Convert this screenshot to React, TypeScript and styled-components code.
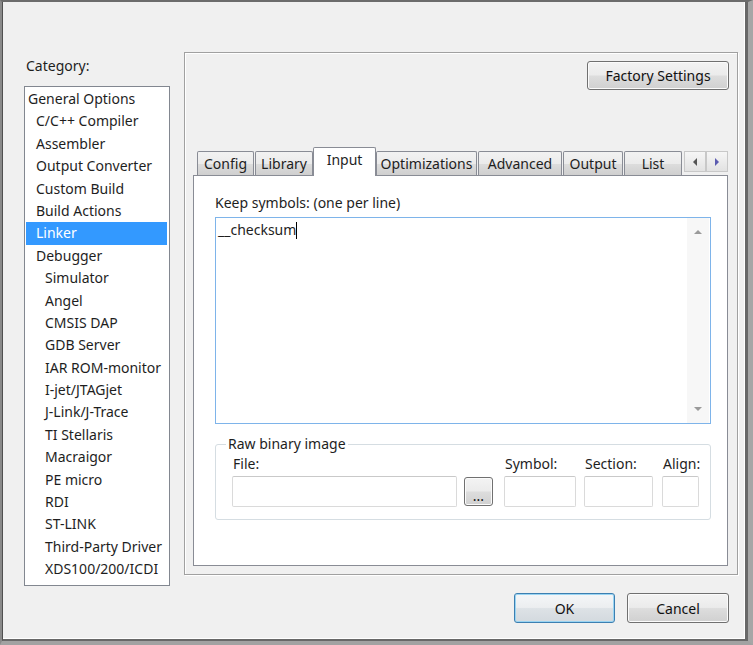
import React from 'react';
import styled, { createGlobalStyle, css } from 'styled-components';

const FONT = `"Noto Sans", "Open Sans", sans-serif`;

const GlobalStyle = createGlobalStyle`
  html, body { margin: 0; padding: 0; }
  body {
    background: #f0f0f0;
    font-family: ${FONT};
    font-size: 14px;
    color: #1e1e1e;
  }
  * { box-sizing: border-box; }
`;

const Window = styled.div`
  width: 753px;
  height: 645px;
  background: #f0f0f0;
  border-top: 2px solid #6c6c6c;
  border-left: 2px solid #8a8a8a;
  border-right: 5px solid #a6a6a6;
  border-bottom: 4px solid #a2a2a2;
  display: flex;
  overflow: hidden;
`;

const Frame = styled.div`
  flex: 1;
  display: flex;
  align-items: flex-start;
  border-left: 1px solid #505050;
  border-right: 3px solid #686868;
  border-bottom: 2px solid #686868;
  box-shadow: inset -1px 0 0 #fff, inset 0 -1px 0 #fff;
  padding-left: 21px;
`;

const LeftColumn = styled.div`
  width: 146px;
  display: flex;
  flex-direction: column;
  margin-top: 55px;
`;

const CategoryLabel = styled.div`
  height: 18px;
  line-height: 18px;
  padding-left: 2px;
`;

const CategoryList = styled.div`
  margin-top: 11px;
  height: 500px;
  background: #fff;
  border: 1px solid #828790;
  padding: 1px 2px 1px 1px;
`;

const CategoryItem = styled.div<{ $level: number; $selected?: boolean }>`
  height: 22.4px;
  line-height: 22.4px;
  white-space: nowrap;
  padding-left: ${(p) => 2 + (p.$level === 0 ? 0 : p.$level === 1 ? 8 : 17)}px;
  ${(p) =>
    p.$selected &&
    css`
      background: #3399ff;
      color: #fff;
    `}
`;

const RightColumn = styled.div`
  width: 554px;
  margin-left: 14px;
  margin-top: 50px;
  display: flex;
  flex-direction: column;
`;

const Panel = styled.div`
  height: 523px;
  border: 1px solid #a0a0a0;
  box-shadow: 1px 1px 0 #fff, inset 1px 1px 0 #fff;
  display: flex;
  flex-direction: column;
  padding: 8px 8px 8px 8px;
`;

const FactoryRow = styled.div`
  display: flex;
  justify-content: flex-end;
`;

const PushButton = styled.button<{ $w: number; $h: number; $default?: boolean }>`
  width: ${(p) => p.$w}px;
  height: ${(p) => p.$h}px;
  font-family: ${FONT};
  font-size: 14px;
  color: #111;
  padding: 0;
  border: 1px solid #707070;
  border-radius: 3px;
  background: linear-gradient(#f3f3f3 0%, #ebebeb 48%, #dddddd 52%, #d0d0d0 100%);
  box-shadow: inset 0 0 0 1px #fbfbfb;
  ${(p) =>
    p.$default &&
    css`
      border-color: #3c7fb1;
      background: linear-gradient(#f4f6f8 0%, #eceef0 48%, #dde2e6 52%, #d3d9de 100%);
      box-shadow: inset 0 0 0 1px #9ad4f2;
    `}
`;

const TabControl = styled.div`
  margin-top: 57px;
  margin-right: 1px;
  flex: 1;
  display: flex;
  flex-direction: column;
`;

const TabStrip = styled.div`
  height: 28px;
  display: flex;
  align-items: flex-end;
  gap: 1px;
  padding-left: 4px;
  position: relative;
  z-index: 1;
`;

const Tab = styled.div<{ $w: number; $active?: boolean }>`
  width: ${(p) => p.$w}px;
  height: 24px;
  line-height: 23px;
  text-align: center;
  white-space: nowrap;
  border: 1px solid #898c95;
  border-bottom: none;
  border-radius: 2px 2px 0 0;
  background: linear-gradient(#f2f2f2 0%, #ebebeb 50%, #dddddd 50%, #cfcfcf 100%);
  ${(p) =>
    p.$active &&
    css`
      height: 29px;
      line-height: 24px;
      margin: 0 -1px -1px;
      background: #fff;
    `}
`;

const TabScroller = styled.div`
  margin-left: auto;
  align-self: flex-start;
  margin-top: 4px;
  display: flex;
`;

const ScrollArrowButton = styled.div`
  width: 22px;
  height: 21px;
  border: 1px solid #c8c8c8;
  background: linear-gradient(#f6f6f6, #e2e2e2);
  display: flex;
  align-items: center;
  justify-content: center;
`;

const TabPage = styled.div`
  flex: 1;
  background: #fff;
  border: 1px solid #898c95;
  padding: 18px 16px 0 21px;
  display: flex;
  flex-direction: column;
`;

const FieldCaption = styled.div`
  height: 18px;
  line-height: 18px;
  white-space: nowrap;
`;

const Memo = styled.div`
  margin-top: 5px;
  width: 496px;
  height: 207px;
  border: 1px solid #7eb4ea;
  display: flex;
`;

const MemoText = styled.div`
  flex: 1;
  padding: 3px 2px;
  line-height: 18px;
`;

const Caret = styled.span`
  display: inline-block;
  width: 1px;
  height: 17px;
  background: #000;
  vertical-align: -4px;
`;

const MemoScroll = styled.div`
  width: 22px;
  margin-right: 1px;
  background: #f7f7f7;
  display: flex;
  flex-direction: column;
  justify-content: space-between;
`;

const MemoScrollButton = styled.div`
  height: 28px;
  display: flex;
  align-items: center;
  justify-content: center;
`;

const Group = styled.fieldset`
  margin: 12px 0 0;
  width: 496px;
  border: 1px solid #d5dde2;
  border-radius: 3px;
  padding: 3px 10px 12px 16px;
`;

const GroupLegend = styled.legend`
  padding: 0 2px;
  line-height: 16px;
  margin-left: -6px;
`;

const FieldRow = styled.div`
  display: flex;
  align-items: flex-end;
`;

const Field = styled.div<{ $w: number; $ml?: number }>`
  width: ${(p) => p.$w}px;
  margin-left: ${(p) => p.$ml ?? 0}px;
  display: flex;
  flex-direction: column;
`;

const FieldLabel = styled.div`
  line-height: 18px;
  height: 18px;
  margin-bottom: 3px;
  padding-left: 1px;
  white-space: nowrap;
`;

const TextBox = styled.div`
  height: 31px;
  background: #fff;
  border: 1px solid #dadada;
  border-top-color: #c9c9c9;
  border-radius: 2px;
`;

const BrowseButton = styled(PushButton)`
  margin-left: 7px;
  margin-bottom: 1px;
  line-height: 1;
  padding-top: 8px;
`;

const ButtonRow = styled.div`
  margin-top: 18px;
  display: flex;
  justify-content: flex-end;
  gap: 12px;
  padding-right: 9px;
`;

const categories: { label: string; level: number }[] = [
  { label: 'General Options', level: 0 },
  { label: 'C/C++ Compiler', level: 1 },
  { label: 'Assembler', level: 1 },
  { label: 'Output Converter', level: 1 },
  { label: 'Custom Build', level: 1 },
  { label: 'Build Actions', level: 1 },
  { label: 'Linker', level: 1 },
  { label: 'Debugger', level: 1 },
  { label: 'Simulator', level: 2 },
  { label: 'Angel', level: 2 },
  { label: 'CMSIS DAP', level: 2 },
  { label: 'GDB Server', level: 2 },
  { label: 'IAR ROM-monitor', level: 2 },
  { label: 'I-jet/JTAGjet', level: 2 },
  { label: 'J-Link/J-Trace', level: 2 },
  { label: 'TI Stellaris', level: 2 },
  { label: 'Macraigor', level: 2 },
  { label: 'PE micro', level: 2 },
  { label: 'RDI', level: 2 },
  { label: 'ST-LINK', level: 2 },
  { label: 'Third-Party Driver', level: 2 },
  { label: 'XDS100/200/ICDI', level: 2 },
];

const tabs: { label: string; w: number }[] = [
  { label: 'Config', w: 57 },
  { label: 'Library', w: 58 },
  { label: 'Input', w: 63 },
  { label: 'Optimizations', w: 101 },
  { label: 'Advanced', w: 84 },
  { label: 'Output', w: 60 },
  { label: 'List', w: 58 },
];

const Triangle = ({ dir, color }: { dir: 'left' | 'right' | 'up' | 'down'; color: string }) => {
  const pts =
    dir === 'left'
      ? '6,0 2,4 6,8'
      : dir === 'right'
      ? '2,0 6,4 2,8'
      : dir === 'up'
      ? '0,6 4,2 8,6'
      : '0,2 4,6 8,2';
  return (
    <svg width="8" height="8" viewBox="0 0 8 8">
      <polygon points={pts} fill={color} />
    </svg>
  );
};

export default function App() {
  return (
    <>
      <GlobalStyle />
      <Window>
        <Frame>
          <LeftColumn>
            <CategoryLabel>Category:</CategoryLabel>
            <CategoryList>
              {categories.map((c) => (
                <CategoryItem key={c.label} $level={c.level} $selected={c.label === 'Linker'}>
                  {c.label}
                </CategoryItem>
              ))}
            </CategoryList>
          </LeftColumn>
          <RightColumn>
            <Panel>
              <FactoryRow>
                <PushButton $w={142} $h={29}>Factory Settings</PushButton>
              </FactoryRow>
              <TabControl>
                <TabStrip>
                  {tabs.map((t) => (
                    <Tab key={t.label} $w={t.w} $active={t.label === 'Input'}>
                      {t.label}
                    </Tab>
                  ))}
                  <TabScroller>
                    <ScrollArrowButton>
                      <Triangle dir="left" color="#555" />
                    </ScrollArrowButton>
                    <ScrollArrowButton>
                      <Triangle dir="right" color="#5b5bb0" />
                    </ScrollArrowButton>
                  </TabScroller>
                </TabStrip>
                <TabPage>
                  <FieldCaption>Keep symbols: (one per line)</FieldCaption>
                  <Memo>
                    <MemoText>
                      __checksum
                      <Caret />
                    </MemoText>
                    <MemoScroll>
                      <MemoScrollButton>
                        <Triangle dir="up" color="#9a9a9a" />
                      </MemoScrollButton>
                      <MemoScrollButton>
                        <Triangle dir="down" color="#9a9a9a" />
                      </MemoScrollButton>
                    </MemoScroll>
                  </Memo>
                  <Group>
                    <GroupLegend>Raw binary image</GroupLegend>
                    <FieldRow>
                      <Field $w={225}>
                        <FieldLabel>File:</FieldLabel>
                        <TextBox />
                      </Field>
                      <BrowseButton $w={29} $h={29}>...</BrowseButton>
                      <Field $w={72} $ml={11}>
                        <FieldLabel>Symbol:</FieldLabel>
                        <TextBox />
                      </Field>
                      <Field $w={69} $ml={8}>
                        <FieldLabel>Section:</FieldLabel>
                        <TextBox />
                      </Field>
                      <Field $w={37} $ml={9}>
                        <FieldLabel>Align:</FieldLabel>
                        <TextBox />
                      </Field>
                    </FieldRow>
                  </Group>
                </TabPage>
              </TabControl>
            </Panel>
            <ButtonRow>
              <PushButton $w={101} $h={30} $default>OK</PushButton>
              <PushButton $w={102} $h={30}>Cancel</PushButton>
            </ButtonRow>
          </RightColumn>
        </Frame>
      </Window>
    </>
  );
}
